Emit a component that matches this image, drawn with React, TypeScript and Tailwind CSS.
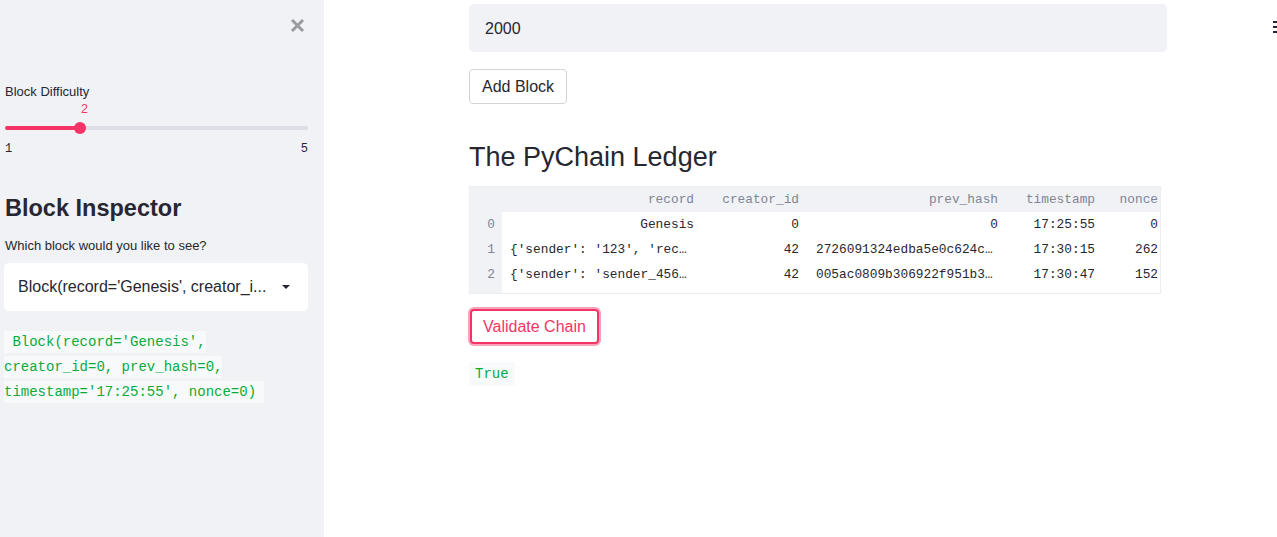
import React from 'react';

const sans = { fontFamily: '"Liberation Sans", Arial, sans-serif' };
const mono = { fontFamily: '"Liberation Mono", "DejaVu Sans Mono", monospace' };

const rows = [
  { idx: 0, record: 'Genesis', recordLeft: false, creator: '0', prev: '0', ts: '17:25:55', nonce: '0' },
  { idx: 1, record: "{'sender': '123', 'rec…", recordLeft: true, creator: '42', prev: '2726091324edba5e0c624c…', ts: '17:30:15', nonce: '262' },
  { idx: 2, record: "{'sender': 'sender_456…", recordLeft: true, creator: '42', prev: '005ac0809b306922f951b3…', ts: '17:30:47', nonce: '152' },
];

function Sidebar() {
  return (
    <aside className="w-[324px] h-[537px] shrink-0 bg-[#f0f2f6] relative">
      <div className="flex justify-end pr-[19px] pt-[18px]">
        <svg width="15" height="15" viewBox="0 0 15 15">
          <path d="M2 2 L13 13 M13 2 L2 13" stroke="#9a9a9f" strokeWidth="3" strokeLinecap="butt" />
        </svg>
      </div>

      <div className="pl-[5px] pr-[16px] mt-[51px]">
        <div className="text-[13px] text-[#262730] leading-4">Block Difficulty</div>
        <div className="relative h-[45px] mt-[2px]">
          <div className="absolute left-[76px] top-[-1px] text-[12.5px] text-[#f63366] leading-4">2</div>
          <div className="absolute left-0 right-0 top-[24px] h-[4px] rounded bg-[#dcdfe8]" />
          <div className="absolute left-0 w-[75px] top-[24px] h-[4px] rounded bg-[#f63366]" />
          <div className="absolute left-[69px] top-[20px] w-[12px] h-[12px] rounded-full bg-[#f63366]" />
        </div>
        <div className="flex justify-between text-[12px] text-[#262730] leading-4 mt-[-6px]" style={mono}>
          <span>1</span>
          <span>5</span>
        </div>
      </div>

      <div className="pl-[5px] pr-[16px] mt-[37px]">
        <h2 className="text-[23.5px] font-bold text-[#262730] leading-7">Block Inspector</h2>
        <div className="text-[13px] text-[#262730] mt-[16px] leading-4">Which block would you like to see?</div>
      </div>

      <div className="ml-[4px] mr-[16px] mt-[9px] h-[48px] bg-white rounded-[5px] flex items-center pl-[14px] pr-[17px] justify-between">
        <span className="text-[16px] text-[#262730]">Block(record='Genesis', creator_i...</span>
        <svg width="10" height="6" viewBox="0 0 10 6">
          <path d="M1 1 L5 5 L9 1 Z" fill="#262730" />
        </svg>
      </div>

      <div className="mt-[19px] pl-[4px] pr-[40px] text-[14px] leading-[25px] text-[#09ab3b]" style={mono}>
        <span className="bg-[#f8f9fb] [box-decoration-break:clone] py-[3px]">
          &nbsp;Block(record='Genesis', creator_id=0, prev_hash=0, timestamp='17:25:55', nonce=0)&nbsp;
        </span>
      </div>
    </aside>
  );
}

function Ledger() {
  const th = 'h-[25px] text-right pr-[8px] font-normal text-[#808495]';
  const td = 'h-[25px] text-right pr-[8px] text-[#262730] whitespace-nowrap';
  return (
    <div className="border border-[#eceef3] w-[692px] text-[12.8px]" style={mono}>
      <table className="border-collapse table-fixed w-full">
        <colgroup>
          <col className="w-[32px]" />
          <col className="w-[200px]" />
          <col className="w-[105px]" />
          <col className="w-[199px]" />
          <col className="w-[97px]" />
          <col />
        </colgroup>
        <thead>
          <tr className="bg-[#f0f2f6]">
            <th className={th}></th>
            <th className={th}>record</th>
            <th className={th}>creator_id</th>
            <th className={th}>prev_hash</th>
            <th className={th}>timestamp</th>
            <th className="h-[25px] text-right pr-[2px] font-normal text-[#808495]">nonce</th>
          </tr>
        </thead>
        <tbody>
          {rows.map((r) => (
            <tr key={r.idx}>
              <td className="h-[25px] bg-[#f0f2f6] text-[#808495] text-right pr-[7px]">{r.idx}</td>
              <td className={r.recordLeft ? 'h-[25px] text-left pl-[8px] text-[#262730] whitespace-nowrap' : td}>{r.record}</td>
              <td className={td}>{r.creator}</td>
              <td className={r.prev.length > 1 ? 'h-[25px] text-left pl-[9px] text-[#262730] whitespace-nowrap' : td}>{r.prev}</td>
              <td className={td}>{r.ts}</td>
              <td className="h-[25px] text-right pr-[2px] text-[#262730]">{r.nonce}</td>
            </tr>
          ))}
          <tr>
            <td className="h-[6px] bg-[#f0f2f6]"></td>
            <td colSpan={5}></td>
          </tr>
        </tbody>
      </table>
    </div>
  );
}

export default function App() {
  return (
    <div className="flex w-[1277px] h-[537px] bg-white overflow-hidden" style={sans}>
      <Sidebar />
      <main className="flex-1 relative">
        <div className="ml-[145px] w-[698px] pt-[4px]">
          <div className="h-[48px] rounded-[5px] bg-[#f0f2f6] flex items-center pl-[16px] pt-[2px] text-[16px] text-[#262730]">
            2000
          </div>

          <button className="mt-[17px] h-[35px] px-[12px] border border-[#d3d4d8] rounded-[4px] bg-white text-[16px] text-[#262730]">
            Add Block
          </button>

          <h1 className="mt-[37px] text-[27px] leading-8 text-[#262730]">The PyChain Ledger</h1>

          <div className="mt-[13px]">
            <Ledger />
          </div>

          <button className="mt-[15px] ml-[1px] h-[35px] px-[11px] border-2 border-[#f63366] rounded-[4px] bg-white text-[16px] text-[#f63366] shadow-[0_0_0_2px_rgba(246,51,102,0.45)]">
            Validate Chain
          </button>

          <div className="mt-[17px]">
            <span className="inline-block bg-[#f8f9fb] rounded-[3px] px-[6px] leading-[24px] text-[14px] text-[#09ab3b]" style={mono}>
              True
            </span>
          </div>
        </div>

        <div className="absolute right-0 top-[21px] w-[4px] flex flex-col gap-[3px]">
          <div className="h-[2px] bg-[#262730]" />
          <div className="h-[2px] bg-[#262730]" />
          <div className="h-[2px] bg-[#262730]" />
        </div>
      </main>
    </div>
  );
}
